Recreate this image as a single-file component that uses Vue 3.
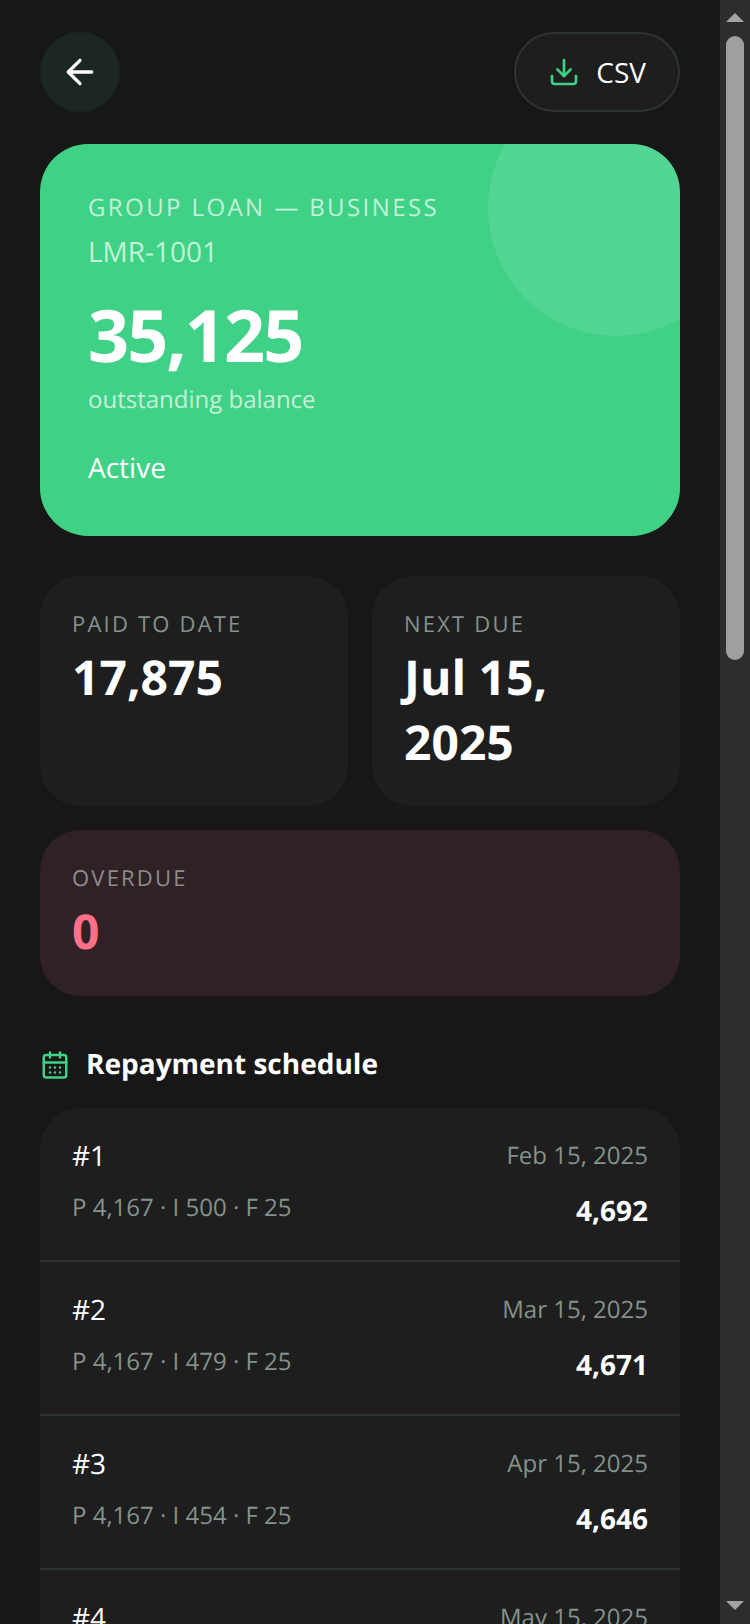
<template>
  <div class="screen">
    <main class="page">
      <header class="topbar">
        <button class="back-btn" aria-label="Back">
          <svg width="40" height="40" viewBox="0 0 24 24" fill="none" stroke="#fff" stroke-width="2" stroke-linecap="round" stroke-linejoin="round">
            <path d="M12 19l-7-7 7-7" />
            <path d="M19 12H5" />
          </svg>
        </button>
        <button class="csv-btn">
          <svg width="32" height="32" viewBox="0 0 24 24" fill="none" stroke="#3fd286" stroke-width="2" stroke-linecap="round" stroke-linejoin="round">
            <path d="M21 15v4a2 2 0 0 1-2 2H5a2 2 0 0 1-2-2v-4" />
            <path d="M7 10l5 5 5-5" />
            <path d="M12 15V3" />
          </svg>
          <span>CSV</span>
        </button>
      </header>

      <section class="hero">
        <div class="hero-circle"></div>
        <div class="hero-type">GROUP LOAN — BUSINESS</div>
        <div class="hero-code">LMR-1001</div>
        <div class="hero-amount">35,125</div>
        <div class="hero-sub">outstanding balance</div>
        <div class="hero-status">Active</div>
      </section>

      <section class="stats">
        <div class="stat">
          <div class="stat-label">PAID TO DATE</div>
          <div class="stat-value">17,875</div>
        </div>
        <div class="stat">
          <div class="stat-label">NEXT DUE</div>
          <div class="stat-value">Jul 15, 2025</div>
        </div>
        <div class="stat stat-overdue">
          <div class="stat-label">OVERDUE</div>
          <div class="stat-value">0</div>
        </div>
      </section>

      <h2 class="section-title">
        <svg class="title-icon" width="30" height="30" viewBox="0 0 24 24" fill="none" stroke="#3fd286" stroke-width="2" stroke-linecap="round" stroke-linejoin="round">
          <rect x="3" y="4" width="18" height="18" rx="2" />
          <path d="M16 2v4M8 2v4M3 10h18" />
          <path d="M8 14h.01M12 14h.01M16 14h.01M8 18h.01M12 18h.01M16 18h.01" />
        </svg>
        <span>Repayment schedule</span>
      </h2>

      <section class="schedule">
        <div v-for="row in rows" :key="row.no" class="row">
          <div class="row-line">
            <span class="row-no">#{{ row.no }}</span>
            <span class="row-date">{{ row.date }}</span>
          </div>
          <div class="row-line row-line-second">
            <span class="row-split">{{ row.split }}</span>
            <span class="row-total">{{ row.total }}</span>
          </div>
        </div>
      </section>
    </main>

    <aside class="scrollbar">
      <div class="arrow arrow-up"></div>
      <div class="thumb"></div>
      <div class="arrow arrow-down"></div>
    </aside>
  </div>
</template>

<script setup>
const rows = [
  { no: 1, date: 'Feb 15, 2025', split: 'P 4,167 · I 500 · F 25', total: '4,692' },
  { no: 2, date: 'Mar 15, 2025', split: 'P 4,167 · I 479 · F 25', total: '4,671' },
  { no: 3, date: 'Apr 15, 2025', split: 'P 4,167 · I 454 · F 25', total: '4,646' },
  { no: 4, date: 'May 15, 2025', split: 'P 4,167 · I 433 · F 25', total: '4,625' }
]
</script>

<style>
html,
body {
  margin: 0;
  background: #171717;
}
</style>

<style scoped>
.screen {
  display: flex;
  width: 750px;
  height: 1624px;
  overflow: hidden;
  background: #171717;
  color: #fff;
  font-family: "Open Sans", "Noto Sans", sans-serif;
  text-rendering: geometricPrecision;
}

.page {
  flex: 1;
  min-width: 0;
  box-sizing: border-box;
  padding: 32px 40px 0;
}

.topbar {
  display: flex;
  justify-content: space-between;
  align-items: center;
}

.back-btn {
  display: flex;
  align-items: center;
  justify-content: center;
  width: 80px;
  height: 80px;
  padding: 0;
  border: 0;
  border-radius: 50%;
  background: #1c2723;
}

.csv-btn {
  display: flex;
  align-items: center;
  gap: 16px;
  height: 80px;
  box-sizing: border-box;
  padding: 0 32px;
  border: 2px solid #2b3430;
  border-radius: 40px;
  background: #1e1e1e;
  color: #fff;
  font-family: inherit;
  font-size: 28px;
}

.hero {
  position: relative;
  overflow: hidden;
  box-sizing: border-box;
  height: 392px;
  margin-top: 32px;
  padding: 48px;
  border-radius: 48px;
  background: #3fd286;
}

.hero-circle {
  position: absolute;
  top: -64px;
  right: -64px;
  width: 256px;
  height: 256px;
  border-radius: 50%;
  background: rgba(255, 255, 255, 0.1);
}

.hero-type {
  font-size: 24px;
  line-height: 32px;
  letter-spacing: 2.4px;
  color: rgba(255, 255, 255, 0.7);
}

.hero-code {
  margin-top: 8px;
  font-size: 28px;
  line-height: 40px;
  color: rgba(255, 255, 255, 0.7);
}

.hero-amount {
  margin-top: 20px;
  font-size: 72px;
  line-height: 86px;
  font-weight: 700;
  letter-spacing: -2px;
}

.hero-sub {
  margin-top: 6px;
  font-size: 24px;
  line-height: 32px;
  color: rgba(255, 255, 255, 0.7);
}

.hero-status {
  margin-top: 32px;
  font-size: 28px;
  line-height: 40px;
}

.stats {
  display: grid;
  grid-template-columns: 1fr 1fr;
  gap: 24px;
  margin-top: 40px;
}

.stat {
  box-sizing: border-box;
  min-width: 0;
  padding: 32px 32px 31px;
  border-radius: 40px;
  background: #1e1e1e;
}

.stat-overdue {
  grid-column: 1 / 3;
  background: #302125;
}

.stat-label {
  font-size: 22px;
  line-height: 32px;
  letter-spacing: 2.2px;
  color: #84928c;
}

.stat-overdue .stat-label {
  color: #8c8c8c;
}

.stat-value {
  margin-top: 6px;
  font-size: 48px;
  line-height: 64.5px;
  font-weight: 700;
}

.stat-overdue .stat-value {
  color: #ff7088;
}

.section-title {
  display: flex;
  align-items: center;
  gap: 16px;
  height: 44px;
  margin: 46.5px 0 0;
  font-size: 28px;
  font-weight: 700;
}

.title-icon {
  margin-top: 2px;
}

.schedule {
  margin-top: 22px;
  border-radius: 40px;
  background: #1e1e1e;
}

.row {
  box-sizing: border-box;
  height: 154px;
  padding: 29px 32px 0;
  border-bottom: 2px solid #2b3430;
}

.row-line {
  display: flex;
  justify-content: space-between;
  align-items: center;
}

.row-line-second {
  align-items: flex-start;
  margin-top: 15px;
}

.row-no {
  font-size: 28px;
  line-height: 38px;
}

.row-date {
  font-size: 24px;
  line-height: 38px;
  color: #84928c;
}

.row-split {
  font-size: 24px;
  line-height: 36px;
  color: #84928c;
}

.row-total {
  font-size: 28px;
  line-height: 42px;
  font-weight: 700;
}

.scrollbar {
  display: flex;
  flex-direction: column;
  align-items: center;
  flex: none;
  box-sizing: border-box;
  width: 30px;
  padding: 13px 0 14px;
  background: #2d2d2d;
}

.thumb {
  width: 18px;
  height: 624px;
  margin-top: 14px;
  border-radius: 9px;
  background: #9f9f9f;
}

.arrow {
  width: 0;
  height: 0;
  border-left: 9px solid transparent;
  border-right: 9px solid transparent;
}

.arrow-up {
  border-bottom: 9px solid #a3a3a3;
}

.arrow-down {
  margin-top: auto;
  border-top: 9px solid #a3a3a3;
}
</style>
